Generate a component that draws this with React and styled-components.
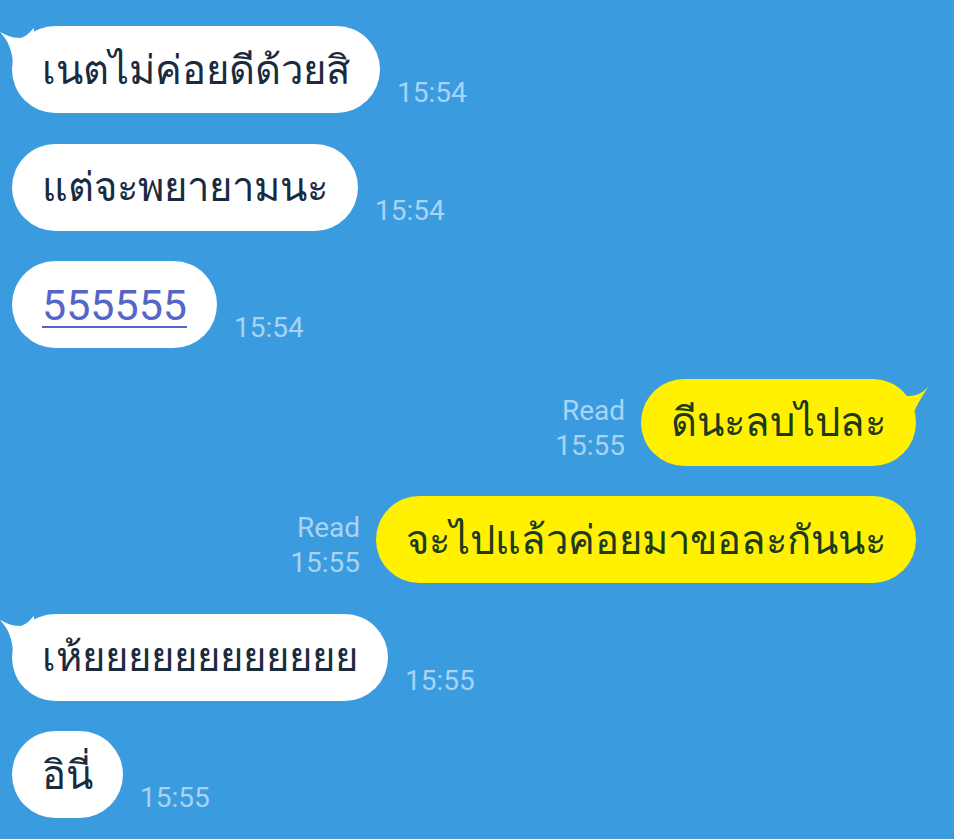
import React from "react";
import styled, { createGlobalStyle } from "styled-components";

const Global = createGlobalStyle`
  html, body { margin: 0; padding: 0; background: #3b9bdf; }
  body { font-family: Roboto, "Noto Sans", sans-serif; }
`;

const Chat = styled.div`
  width: 954px;
  height: 839px;
  overflow: hidden;
  background: #3b9bdf;
  box-sizing: border-box;
  padding: 26px 38px 0 12px;
  display: flex;
  flex-direction: column;
  gap: 30.5px;
`;

const Row = styled.div`
  display: flex;
  align-items: flex-end;
  justify-content: ${(p) => (p.$mine ? "flex-end" : "flex-start")};
  gap: ${(p) => (p.$mine ? "16px" : "17px")};
`;

const Bubble = styled.div`
  position: relative;
  height: 87px;
  box-sizing: border-box;
  padding: 0 30px;
  display: flex;
  align-items: center;
  border-radius: 44px;
  background: ${(p) => (p.$mine ? "#fff100" : "#ffffff")};
  color: ${(p) => (p.$mine ? "#1d3a1d" : "#1b2b3e")};
  font-family: "Noto Sans", "DejaVu Sans", sans-serif;
  font-size: 40px;
  white-space: nowrap;
`;

const Tail = styled.svg`
  position: absolute;
  top: 0;
  ${(p) => (p.$mine ? "right: -16px;" : "left: -14px;")}
  width: 40px;
  height: 40px;
  fill: ${(p) => (p.$mine ? "#fff100" : "#ffffff")};
`;

const Link = styled.span`
  color: #5566c6;
  text-decoration: underline;
  text-decoration-thickness: 2px;
  text-underline-offset: 6px;
  font-family: Roboto, sans-serif;
  font-size: 43px;
`;

const Meta = styled.div`
  display: flex;
  flex-direction: column;
  align-items: flex-end;
  color: #a8d4f4;
  font-family: Roboto, sans-serif;
  font-size: 28px;
  line-height: 35px;
  margin-bottom: 3px;
`;

const LeftTail = () => (
  <Tail $mine={false} viewBox="0 0 40 40">
    <path d="M2 6 C8 9 14 12 22 12 C28 11 32 6 36 2 L36 40 L15 40 C15 26 10 14 2 6 Z" />
  </Tail>
);

const RightTail = () => (
  <Tail $mine viewBox="0 0 40 40">
    <path d="M38 5 C34 11 28 17 16 17 L4 17 L4 40 L21 40 C21 30 30 18 38 5 Z" />
  </Tail>
);

const messages = [
  { text: "เนตไม่ค่อยดีด้วยสิ", time: "15:54", tail: true },
  { text: "แต่จะพยายามนะ", time: "15:54" },
  { text: "555555", time: "15:54", link: true },
  { text: "ดีนะลบไปละ", time: "15:55", mine: true, tail: true },
  { text: "จะไปแล้วค่อยมาขอละกันนะ", time: "15:55", mine: true },
  { text: "เห้ยยยยยยยยยยยย", time: "15:55", tail: true },
  { text: "อินี่", time: "15:55" },
];

export default function App() {
  return (
    <>
      <Global />
      <Chat>
        {messages.map((m, i) =>
          m.mine ? (
            <Row key={i} $mine>
              <Meta>
                <span>Read</span>
                <span>{m.time}</span>
              </Meta>
              <Bubble $mine>
                {m.tail && <RightTail />}
                {m.text}
              </Bubble>
            </Row>
          ) : (
            <Row key={i}>
              <Bubble>
                {m.tail && <LeftTail />}
                {m.link ? <Link>{m.text}</Link> : m.text}
              </Bubble>
              <Meta>
                <span>{m.time}</span>
              </Meta>
            </Row>
          )
        )}
      </Chat>
    </>
  );
}
